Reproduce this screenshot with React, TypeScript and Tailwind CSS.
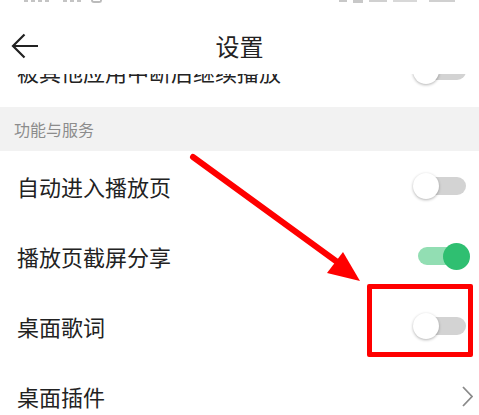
import React from "react";

function Toggle({ on }: { on: boolean }) {
  return (
    <div className="relative w-[57px] h-[28px] shrink-0">
      <div
        className={
          on
            ? "absolute left-[5px] right-[4px] top-[5px] h-[18px] rounded-full bg-[#92deb3]"
            : "absolute left-[5px] right-[4px] top-[5px] h-[18px] rounded-full bg-[#d3d3d3]"
        }
      />
      {on ? (
        <div className="absolute right-0 top-[1px] w-[27px] h-[27px] rounded-full bg-[#2fbf71]" />
      ) : (
        <div className="absolute left-0 top-[1px] w-[26px] h-[26px] rounded-full bg-white shadow-[0_1px_3px_rgba(0,0,0,0.3)]" />
      )}
    </div>
  );
}

function Row({ label, children }: { label: string; children: React.ReactNode }) {
  return (
    <div className="h-[70px] flex items-center justify-between pl-[17px] pr-[9px]">
      <span className="text-[22px] text-[#222] leading-none">{label}</span>
      {children}
    </div>
  );
}

export default function App() {
  return (
    <div className="relative w-[479px] h-[415px] overflow-hidden bg-white font-[family-name:'Noto_Sans_CJK_SC','Noto_Sans',sans-serif]">
      {/* status bar, cut off at the top */}
      <div className="h-[6px] flex items-start px-[24px]">
        <div className="flex gap-[3px]">
          <div className="w-[4px] h-[2px] bg-[#c4c4c4]" />
          <div className="w-[4px] h-[2px] bg-[#c4c4c4]" />
          <div className="w-[4px] h-[2px] bg-[#c4c4c4]" />
          <div className="w-[4px] h-[2px] bg-[#c4c4c4]" />
        </div>
        <div className="flex gap-[3px] ml-[14px]">
          <div className="w-[4px] h-[2px] bg-[#c4c4c4]" />
          <div className="w-[4px] h-[2px] bg-[#c4c4c4]" />
          <div className="w-[4px] h-[2px] bg-[#c4c4c4]" />
        </div>
        <div className="ml-[10px] w-[11px] h-[3px] rounded-b-full border-b-2 border-x-2 border-[#bbb]" />
        <div className="ml-auto flex gap-[6px]">
          <div className="w-[8px] h-[2px] bg-[#c8c8c8]" />
          <div className="w-[10px] h-[3px] bg-[#c8c8c8]" />
          <div className="w-[18px] h-[2px] bg-[#d0d0d0]" />
          <div className="w-[24px] h-[2px] bg-[#d8d8d8]" />
          <div className="w-[26px] h-[2px] bg-[#d0d0d0] ml-[6px]" />
        </div>
      </div>

      {/* title bar */}
      <div className="relative h-[68px] pt-[12px] flex items-center justify-center">
        <svg className="absolute left-[11px] top-[27px]" width="28" height="26" viewBox="0 0 28 26" fill="none">
          <path d="M27 13H2M13.5 1.5L2 13L13.5 24.5" stroke="#222" strokeWidth="2.2" strokeLinejoin="miter" />
        </svg>
        <span className="text-[24px] text-[#222] leading-none">设置</span>
      </div>

      {/* row scrolled under the title bar */}
      <div className="h-[33px] overflow-hidden">
        <div className="-mt-[38px]">
          <Row label="被其他应用中断后继续播放">
            <Toggle on={false} />
          </Row>
        </div>
      </div>

      <div className="h-[44px] bg-[#f2f2f2] flex items-center px-[14px]">
        <span className="text-[16px] text-[#8c8c8c] leading-none">功能与服务</span>
      </div>

      <Row label="自动进入播放页">
        <Toggle on={false} />
      </Row>
      <Row label="播放页截屏分享">
        <Toggle on={true} />
      </Row>
      <Row label="桌面歌词">
        <Toggle on={false} />
      </Row>
      <div className="h-[70px] flex items-center justify-between pl-[17px] pr-[6px]">
        <span className="text-[22px] text-[#222] leading-none">桌面插件</span>
        <svg width="11" height="21" viewBox="0 0 11 21" fill="none">
          <path d="M1 1L10 10.5L1 20" stroke="#8a8a8a" strokeWidth="1.8" />
        </svg>
      </div>

      {/* annotation: red arrow and box */}
      <svg className="absolute inset-0 pointer-events-none" width="479" height="415" viewBox="0 0 479 415">
        <line x1="193" y1="157" x2="340" y2="264" stroke="#f00" strokeWidth="6" strokeLinecap="round" />
        <polygon points="360,281 343,252 327,273" fill="#f00" />
      </svg>
      <div className="absolute left-[367px] top-[284px] w-[106px] h-[73px] border-[5px] border-[#f00] rounded-[2px] pointer-events-none" />
    </div>
  );
}
